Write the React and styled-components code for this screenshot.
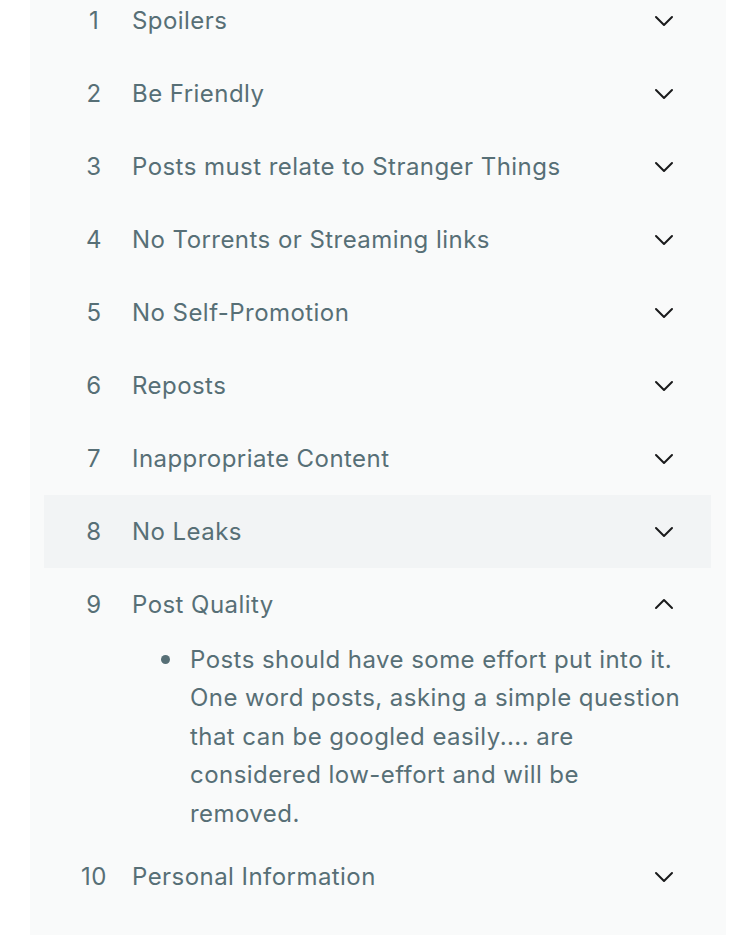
import React, { useState } from "react";
import styled, { createGlobalStyle } from "styled-components";

const Global = createGlobalStyle`
  html, body { margin: 0; padding: 0; background: #ffffff; }
  body { font-family: Inter, "Noto Sans", "Liberation Sans", sans-serif; overflow: hidden; }
`;

const Panel = styled.div`
  margin: -16px 0 0 30px;
  width: 696px;
  min-height: 960px;
  background: #f9fafa;
  padding: 0 15px 0 14px;
  box-sizing: border-box;
`;

const Item = styled.div`
  display: flex;
  flex-direction: column;
`;

const Header = styled.div`
  display: flex;
  align-items: center;
  height: 73px;
  padding: 0 35px 0 20px;
  background: ${(p) => (p.$hover ? "#f2f4f5" : "transparent")};
  color: #576f76;
  font-size: 24px;
  letter-spacing: 0.45px;
  cursor: pointer;
`;

const Num = styled.span`
  width: 60px;
  text-align: center;
  flex: none;
`;

const Title = styled.span`
  flex: 1;
  margin-left: 8px;
`;

const Chevron = styled.svg`
  width: 24px;
  height: 24px;
  flex: none;
  color: #1a1a1b;
`;

const Body = styled.ul`
  margin: 0;
  padding: 0 0 7px 146px;
  width: 495px;
  color: #576f76;
  font-size: 24px;
  letter-spacing: 0.45px;
  line-height: 38.4px;
  list-style: none;
`;

const Bullet = styled.li`
  position: relative;
  &::before {
    content: "";
    position: absolute;
    left: -29px;
    top: 14px;
    width: 9px;
    height: 9px;
    border-radius: 50%;
    background: #576f76;
  }
`;

const rules = [
  "Spoilers",
  "Be Friendly",
  "Posts must relate to Stranger Things",
  "No Torrents or Streaming links",
  "No Self-Promotion",
  "Reposts",
  "Inappropriate Content",
  "No Leaks",
  "Post Quality",
  "Personal Information",
];

const bodies = {
  8: [
    "Posts should have some effort put into it. One word posts, asking a simple question that can be googled easily.... are considered low-effort and will be removed.",
  ],
};

function Icon({ up }) {
  return (
    <Chevron viewBox="0 0 24 24" fill="none" stroke="currentColor" strokeWidth="2" strokeLinecap="round" strokeLinejoin="round">
      {up ? <polyline points="4,15 12,7 20,15" /> : <polyline points="4,8 12,16 20,8" />}
    </Chevron>
  );
}

export default function App() {
  const [open, setOpen] = useState(8);
  const hover = 7;
  return (
    <>
      <Global />
      <Panel>
        {rules.map((r, i) => (
          <Item key={r}>
            <Header $hover={i === hover} onClick={() => setOpen(open === i ? -1 : i)}>
              <Num>{i + 1}</Num>
              <Title>{r}</Title>
              <Icon up={open === i} />
            </Header>
            {open === i && bodies[i] && (
              <Body>
                {bodies[i].map((b) => (
                  <Bullet key={b}>{b}</Bullet>
                ))}
              </Body>
            )}
          </Item>
        ))}
      </Panel>
    </>
  );
}
